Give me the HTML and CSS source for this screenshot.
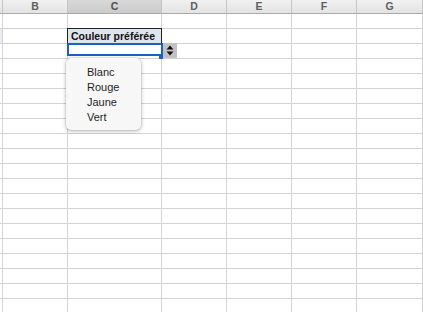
FILE: index.html
```html
<!DOCTYPE html>
<html lang="fr">
<head>
<meta charset="utf-8">
<title>Couleur préférée</title>
<link rel="stylesheet" href="styles.css">
</head>
<body>
<div class="sheet">
  <div class="row head"><div class="c"></div><div class="c">B</div><div class="c on">C</div><div class="c">D</div><div class="c">E</div><div class="c">F</div><div class="c">G</div><div class="c"></div></div>
  <div class="row"><div class="c"></div><div class="c"></div><div class="c"></div><div class="c"></div><div class="c"></div><div class="c"></div><div class="c"></div><div class="c"></div></div>
  <div class="row"><div class="c mark"></div><div class="c"></div><div class="c title">Couleur préférée</div><div class="c"></div><div class="c"></div><div class="c"></div><div class="c"></div><div class="c"></div></div>
  <div class="row"><div class="c"></div><div class="c"></div><div class="c active"><span class="handle"></span><span class="spin"><svg width="8" height="11" viewBox="0 0 8 11"><path d="M4 0.5 L7.5 4.5 H0.5Z M4 10.5 L7.5 6.5 H0.5Z" fill="#111"/></svg></span>
    <ul class="menu"><li>Blanc</li><li>Rouge</li><li>Jaune</li><li>Vert</li></ul></div><div class="c"></div><div class="c"></div><div class="c"></div><div class="c"></div><div class="c"></div></div>
  <div class="row"><div class="c"></div><div class="c"></div><div class="c"></div><div class="c"></div><div class="c"></div><div class="c"></div><div class="c"></div><div class="c"></div></div>
  <div class="row"><div class="c"></div><div class="c"></div><div class="c"></div><div class="c"></div><div class="c"></div><div class="c"></div><div class="c"></div><div class="c"></div></div>
  <div class="row"><div class="c"></div><div class="c"></div><div class="c"></div><div class="c"></div><div class="c"></div><div class="c"></div><div class="c"></div><div class="c"></div></div>
  <div class="row"><div class="c"></div><div class="c"></div><div class="c"></div><div class="c"></div><div class="c"></div><div class="c"></div><div class="c"></div><div class="c"></div></div>
  <div class="row"><div class="c"></div><div class="c"></div><div class="c"></div><div class="c"></div><div class="c"></div><div class="c"></div><div class="c"></div><div class="c"></div></div>
  <div class="row"><div class="c"></div><div class="c"></div><div class="c"></div><div class="c"></div><div class="c"></div><div class="c"></div><div class="c"></div><div class="c"></div></div>
  <div class="row"><div class="c"></div><div class="c"></div><div class="c"></div><div class="c"></div><div class="c"></div><div class="c"></div><div class="c"></div><div class="c"></div></div>
  <div class="row"><div class="c"></div><div class="c"></div><div class="c"></div><div class="c"></div><div class="c"></div><div class="c"></div><div class="c"></div><div class="c"></div></div>
  <div class="row"><div class="c"></div><div class="c"></div><div class="c"></div><div class="c"></div><div class="c"></div><div class="c"></div><div class="c"></div><div class="c"></div></div>
  <div class="row"><div class="c"></div><div class="c"></div><div class="c"></div><div class="c"></div><div class="c"></div><div class="c"></div><div class="c"></div><div class="c"></div></div>
  <div class="row"><div class="c"></div><div class="c"></div><div class="c"></div><div class="c"></div><div class="c"></div><div class="c"></div><div class="c"></div><div class="c"></div></div>
  <div class="row"><div class="c"></div><div class="c"></div><div class="c"></div><div class="c"></div><div class="c"></div><div class="c"></div><div class="c"></div><div class="c"></div></div>
  <div class="row"><div class="c"></div><div class="c"></div><div class="c"></div><div class="c"></div><div class="c"></div><div class="c"></div><div class="c"></div><div class="c"></div></div>
  <div class="row"><div class="c"></div><div class="c"></div><div class="c"></div><div class="c"></div><div class="c"></div><div class="c"></div><div class="c"></div><div class="c"></div></div>
  <div class="row"><div class="c"></div><div class="c"></div><div class="c"></div><div class="c"></div><div class="c"></div><div class="c"></div><div class="c"></div><div class="c"></div></div>
  <div class="row"><div class="c"></div><div class="c"></div><div class="c"></div><div class="c"></div><div class="c"></div><div class="c"></div><div class="c"></div><div class="c"></div></div>
  <div class="row"><div class="c"></div><div class="c"></div><div class="c"></div><div class="c"></div><div class="c"></div><div class="c"></div><div class="c"></div><div class="c"></div></div>
</div>
</body>
</html>
```
FILE: styles.css
```css
html, body {
  margin: 0;
  padding: 0;
  background: #fff;
  overflow: hidden;
}
body {
  width: 423px;
  height: 312px;
  font-family: "Liberation Sans", Arial, sans-serif;
}
.sheet {
  display: flex;
  flex-direction: column;
}
.row {
  display: grid;
  grid-template-columns: 3px 65px 94px 65px 65px 65px 66px 1fr;
  height: 15px;
}
.c {
  box-sizing: border-box;
  border-right: 1px solid #d3d3d3;
  border-bottom: 1px solid #d3d3d3;
  position: relative;
}
.head {
  height: 14px;
}
.head .c {
  background: linear-gradient(#f1f1f1, #e3e3e3);
  border-right-color: #c4c4c4;
  border-bottom-color: #a9a9a9;
  font-weight: bold;
  font-size: 10.5px;
  line-height: 13px;
  text-align: center;
  color: #5e5e5e;
}
.head .c.on {
  background: linear-gradient(#d8d8d8, #cbcbcb);
  color: #4e4e4e;
}
.mark {
  background: #e6eef8;
}
.title {
  background: #dfe5ec;
  font-weight: bold;
  font-size: 10.5px;
  line-height: 14px;
  padding-left: 3px;
  color: #111;
  white-space: nowrap;
}
.title::before {
  content: "";
  position: absolute;
  top: -1px;
  left: -1px;
  right: -1px;
  bottom: -1px;
  border: 1px solid #222;
}
.active::before {
  content: "";
  position: absolute;
  top: -1px;
  left: -1px;
  right: -2px;
  bottom: 2px;
  border: 2px solid #1c5fc6;
}
.handle {
  position: absolute;
  right: -2px;
  bottom: -1px;
  width: 4px;
  height: 4px;
  background: #1c5fc6;
  z-index: 2;
}
.spin {
  position: absolute;
  left: 95px;
  top: -1px;
  width: 14px;
  height: 15px;
  background: #c2c2c2;
  display: flex;
  align-items: center;
  justify-content: center;
  z-index: 2;
}
.spin svg {
  display: block;
}
.menu {
  position: absolute;
  left: -2px;
  top: 14px;
  width: 75px;
  height: 72px;
  margin: 0;
  padding: 7px 0 0 21px;
  box-sizing: border-box;
  list-style: none;
  background: #f7f7f7;
  border-radius: 5px;
  box-shadow: 0 1px 4px rgba(0, 0, 0, 0.28), 0 0 0 0.5px rgba(0, 0, 0, 0.12);
  z-index: 3;
}
.menu li {
  font-size: 11px;
  line-height: 15px;
  color: #1e1e1e;
}
```
